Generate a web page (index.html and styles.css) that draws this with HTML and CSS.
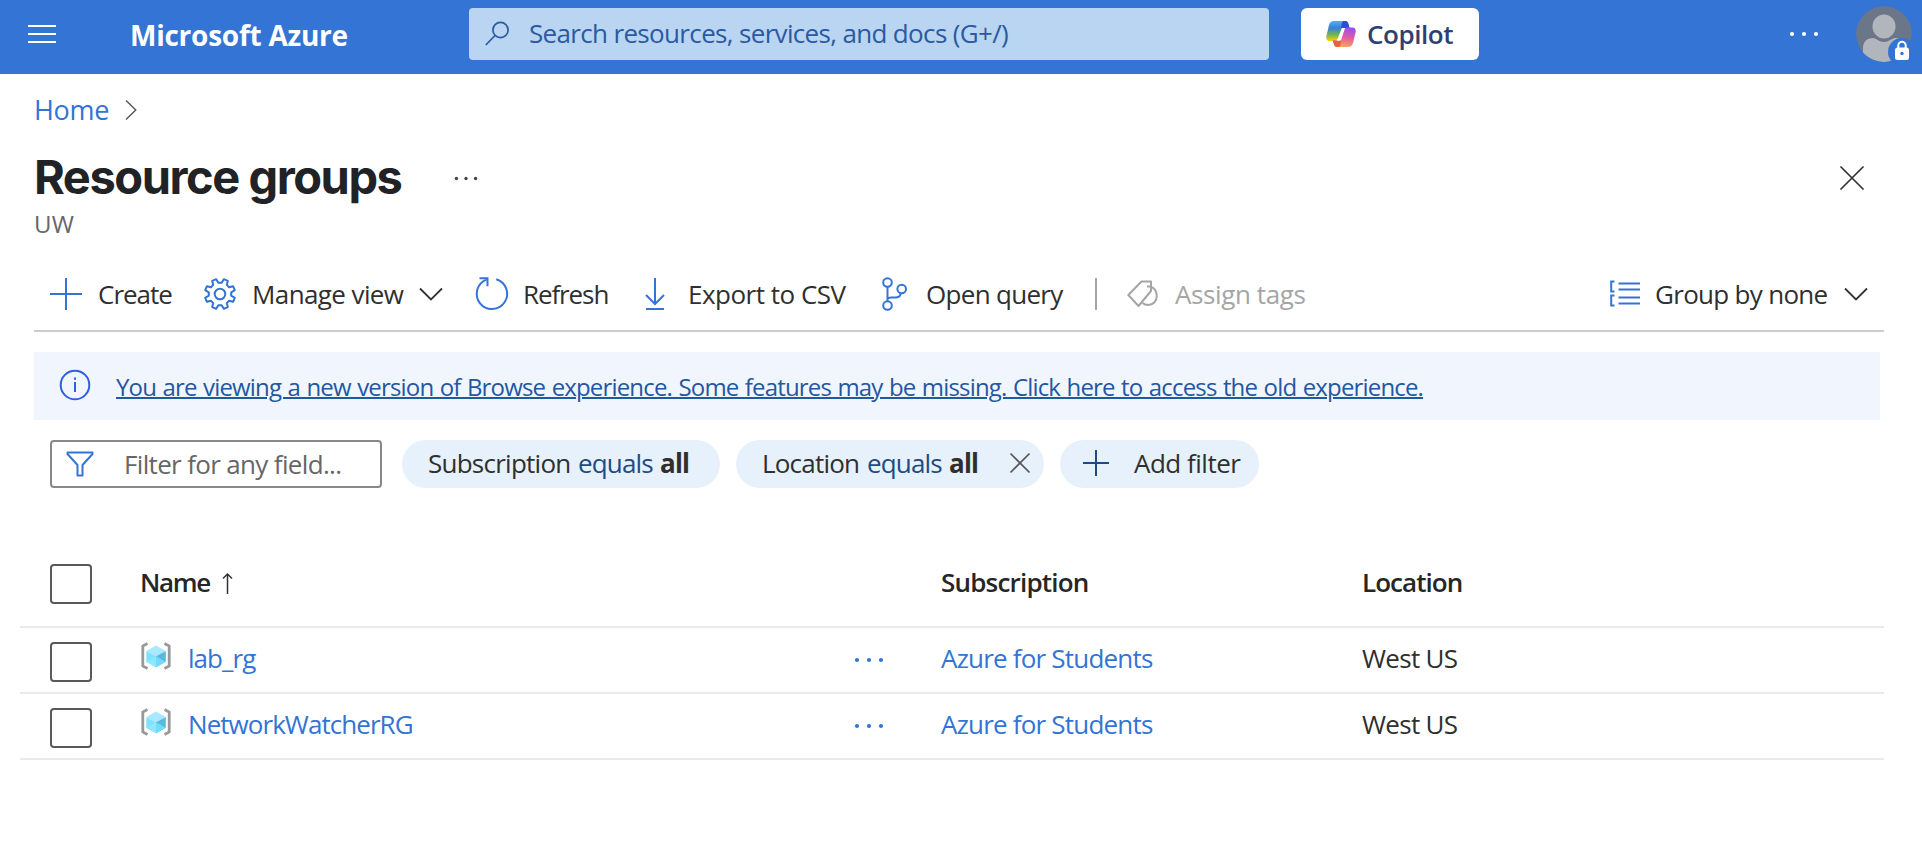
FILE: index.html
```html
<!DOCTYPE html>
<html lang="en">
<head>
<meta charset="utf-8">
<title>Resource groups - Microsoft Azure</title>
<link rel="stylesheet" href="styles.css">
</head>
<body>
<svg class="defs" width="0" height="0" aria-hidden="true">
  <defs>
    <linearGradient id="cpA" x1="0" y1="0" x2="0" y2="1"><stop offset="0" stop-color="#4fb0f4"/><stop offset=".35" stop-color="#3a7fdb"/><stop offset=".68" stop-color="#6fb551"/><stop offset="1" stop-color="#ffd000"/></linearGradient>
    <linearGradient id="cpB" x1=".6" y1="0" x2=".4" y2="1"><stop offset="0" stop-color="#9a4df0"/><stop offset=".5" stop-color="#e0609e"/><stop offset="1" stop-color="#fba556"/></linearGradient>
    <symbol id="rg" viewBox="0 0 30 28">
      <path d="M6.5 1.5 1.8 4v20l4.7 2.5M23.500 1.500 28.200 4v20l-4.700 2.500" fill="none" stroke="#999" stroke-width="2.800"/>
      <path d="M15 3.500 24.800 9 15 14.200 5.300 9z" fill="#a9e8ff"/>
      <path d="M5.300 9 15 14.200v11L5.300 19.700z" fill="#7de2ff"/>
      <path d="M24.800 9 15 14.200v11l9.800-5.500z" fill="#5bb9dc"/>
      <path d="M5.300 19.700 15 14.200v11z" fill="#8ee6ff"/>
      <path d="M24.800 19.700 15 14.200v11z" fill="#6fdcfb"/>
    </symbol>
    <symbol id="dots" viewBox="0 0 30 6"><circle cx="3" cy="3" r="2.100"/><circle cx="15" cy="3" r="2.100"/><circle cx="27" cy="3" r="2.100"/></symbol>
    <symbol id="chev" viewBox="0 0 24 14"><path d="M1 1.500 12 12.500 23 1.500" fill="none" stroke="#333" stroke-width="1.800"/></symbol>
  </defs>
</svg>

<header class="topbar">
  <svg class="menu" width="28" height="18" viewBox="0 0 28 18"><path d="M0 1h28M0 9h28M0 17h28" stroke="#fff" stroke-width="2"/></svg>
  <span class="brand">Microsoft Azure</span>
  <div class="search">
    <svg width="26" height="26" viewBox="0 0 26 26" fill="none" stroke="#2a5a9f" stroke-width="1.700"><circle cx="15.500" cy="9" r="7.600"/><path d="M10 14.500.8 24"/></svg>
    <span class="search-text">Search resources, services, and docs (G+/)</span>
  </div>
  <button class="copilot">
    <svg width="30" height="28" viewBox="0 0 30 28">
      <path d="M8 1h11c2 0 2.800 1.500 3.300 3.500L23.500 8H16l-4 10c-.8 2-2 3-4 3H3.500C1 21 0 19 .3 16.500L3 5c.7-2.500 2.500-4 5-4z" fill="url(#cpA)"/>
      <path d="M17.500 1h2c2 0 2.600 1.500 3.100 3.300L23.600 8H15c.4-3 1-7 2.500-7z" fill="#2a4fd0"/>
      <path d="M22 27H11c-2 0-2.800-1.500-3.300-3.500L6.700 20.500H13L18 10c.8-2 2-2.500 4-2.500h4.500c2.500 0 3.500 2 3.200 4.500L27 23c-.7 2.500-2.500 4-5 4z" fill="url(#cpB)"/>
      <path d="M13 27h-2.200c-1.800 0-2.500-1.500-3-3.300l-1-3.200h8.500c-.4 3-.9 6.500-2.300 6.500z" fill="#e5633f"/>
      <path d="M16.500 8.300H19L15.200 19.500c-.3.800-.8 1.200-1.600 1.200H10.800c.6-.4 1-1 1.300-2l3.400-9.300c.2-.6.500-1 1-1.100z" fill="#fff"/>
    </svg>
    <span>Copilot</span>
  </button>
  <svg class="more" width="30" height="6" fill="#fff"><use href="#dots"/></svg>
  <svg class="avatar" width="58" height="62" viewBox="0 0 58 62">
    <defs><clipPath id="av"><circle cx="28" cy="28" r="28"/></clipPath></defs>
    <g clip-path="url(#av)">
      <circle cx="28" cy="28" r="28" fill="#6b7788"/>
      <ellipse cx="28" cy="20.500" rx="11.500" ry="12" fill="#b1b6bc"/>
      <path d="M7 58V42c0-6 4-10 10-10 3 0 6 4 11 4s8-4 11-4c6 0 10 4 10 10v16z" fill="#b1b6bc"/>
    </g>
    <circle cx="46" cy="46" r="14" fill="#3374d5"/>
    <rect x="39" y="41.500" width="14" height="12.500" rx="2.500" fill="#fff"/>
    <path d="M42.300 42v-2.500a3.700 3.700 0 0 1 7.400 0V42" fill="none" stroke="#fff" stroke-width="2"/>
    <circle cx="46" cy="47.500" r="1.700" fill="#3374d5"/>
  </svg>
</header>

<nav class="crumbs">
  <a class="t-home">Home</a>
  <svg width="12" height="20" viewBox="0 0 12 20"><path d="M1 .5 10.800 10 1 19.500" fill="none" stroke="#555" stroke-width="1.400"/></svg>
</nav>

<div class="title-row">
  <h1>Resource groups</h1>
  <svg class="title-more" width="24" height="5" fill="#444"><use href="#dots"/></svg>
  <svg class="close" width="24" height="24" viewBox="0 0 24 24"><path d="M.5.500l23 23m0-23-23 23" stroke="#333" stroke-width="1.700"/></svg>
</div>
<div class="subtitle">UW</div>

<div class="toolbar">
  <svg width="32" height="32" viewBox="0 0 32 32"><path d="M16 0v32M0 16h32" stroke="#3374d5" stroke-width="2"/></svg>
  <span class="t-create">Create</span>
  <svg width="32" height="32" viewBox="0 0 32 32" fill="none" stroke="#3374d5" stroke-width="2" stroke-linejoin="round"><circle cx="16" cy="16" r="5.300"/><path d="M12.2 1.2 14.300 4.800h3.400L19.800 1.200l4 1.700-1 4 2.300 2.300 4-1 1.700 4-3.600 2.100v3.400l3.600 2.100-1.700 4-4-1-2.300 2.300 1 4-4 1.700-2.100-3.600h-3.400l-2.100 3.600-4-1.700 1-4-2.300-2.300-4 1-1.700-4 3.600-2.100v-3.400L1.200 12.200l1.700-4 4 1 2.300-2.300-1-4z"/></svg>
  <span class="t-manage">Manage view</span>
  <svg width="24" height="14"><use href="#chev"/></svg>
  <svg width="34" height="33" viewBox="0 0 34 33" fill="none" stroke="#3374d5" stroke-width="2"><path d="M21.200 2.200A15.200 15.200 0 1 1 11.500 2.600"/><path d="M4.500 1.200h8v8"/></svg>
  <span class="t-refresh">Refresh</span>
  <svg width="20" height="32" viewBox="0 0 20 32" fill="none" stroke="#3374d5" stroke-width="2"><path d="M10 0v26M1 17l9 9 9-9M1 31h18"/></svg>
  <span class="t-export">Export to CSV</span>
  <svg width="25" height="34" viewBox="0 0 25 34" fill="none" stroke="#3374d5" stroke-width="2"><circle cx="5.500" cy="5.500" r="4.300"/><circle cx="5.500" cy="28.500" r="4.300"/><circle cx="19.700" cy="12" r="4.300"/><path d="M5.500 10v14M5.500 22c1-1.600 2-1.600 3.500-1.600h5c3 0 4.700-1.900 4.700-4.300"/></svg>
  <span class="t-query">Open query</span>
  <i class="sep"></i>
  <svg width="31" height="28" viewBox="0 0 31 28" fill="none" stroke="#a5a5a5" stroke-width="2"><path d="M1.300 15 14.500 1.500H24V11L11.500 26z" stroke-linejoin="round"/><path d="M20 6.500h3.500c4 1.500 6.300 5 6.300 9.500 0 5.500-4 9-8.500 9-2.300 0-4.300-.7-5.800-2"/></svg>
  <span class="t-assign">Assign tags</span>
  <span></span>
  <svg width="30" height="28" viewBox="0 0 30 28" fill="none" stroke="#3374d5" stroke-width="2"><path d="M8.500 3.500H30M8.500 9.500H30M8.500 17.500H30M8.500 23.500H30M4.500 1.500H1.200v10h3.300M4.500 15.500H1.200v10h3.300"/></svg>
  <span class="t-group">Group by none</span>
  <svg width="24" height="14"><use href="#chev"/></svg>
</div>

<div class="banner">
  <svg class="info" width="32" height="32" viewBox="0 0 32 32" fill="none" stroke="#2f5fe0" stroke-width="2"><circle cx="16" cy="16" r="14.300"/><path d="M16 13v10M16 8.500v2.200"/></svg>
  <a class="t-banner">You are viewing a new version of Browse experience. Some features may be missing. Click here to access the old experience.</a>
</div>

<div class="filters">
  <div class="field">
    <svg width="28" height="26" viewBox="0 0 28 26" fill="none" stroke="#3374d5" stroke-width="2" stroke-linejoin="round"><path d="M1.500 1.500h25v1.500L16.500 14v10.500h-5V14L1.500 3z"/></svg>
    <span class="t-filter">Filter for any field...</span>
  </div>
  <div class="pill pill-sub"><span class="t-psub">Subscription</span><em>equals</em><b>all</b></div>
  <div class="pill pill-loc"><span class="t-ploc">Location</span><em>equals</em><b>all</b>
    <svg width="20" height="20" viewBox="0 0 20 20"><path d="M.5.500l19 19m0-19-19 19" stroke="#555" stroke-width="1.700"/></svg></div>
  <div class="pill pill-add"><svg width="26" height="26" viewBox="0 0 26 26"><path d="M13 0v26M0 13h26" stroke="#1d4b85" stroke-width="2"/></svg><span class="t-add">Add filter</span></div>
</div>

<div class="table">
  <div class="row head">
    <i class="check"></i>
    <div class="name"><span class="t-name">Name</span><svg class="sort" width="11" height="21" viewBox="0 0 11 21" fill="none" stroke="#333" stroke-width="1.500"><path d="M5.500 21V1M1 5.500l4.500-4.500L10 5.500"/></svg></div>
    <span></span>
    <span class="t-sub">Subscription</span>
    <span class="t-loc">Location</span>
  </div>
  <div class="row">
    <i class="check"></i>
    <div class="name"><svg class="rg" width="30" height="28"><use href="#rg"/></svg><a class="t-res">lab_rg</a></div>
    <svg class="rowdots" width="30" height="6"><use href="#dots"/></svg>
    <a class="t-azure">Azure for Students</a>
    <span class="t-west">West US</span>
  </div>
  <div class="row">
    <i class="check"></i>
    <div class="name"><svg class="rg" width="30" height="28"><use href="#rg"/></svg><a class="t-res">NetworkWatcherRG</a></div>
    <svg class="rowdots" width="30" height="6"><use href="#dots"/></svg>
    <a class="t-azure">Azure for Students</a>
    <span class="t-west">West US</span>
  </div>
</div>
</body>
</html>
```
FILE: styles.css
```css
* { box-sizing: border-box; }
body {
  margin: 0;
  width: 1922px;
  height: 844px;
  overflow: hidden;
  background: #fff;
  color: #2f2f2f;
  font: 26px/36px "Open Sans", "Noto Sans", sans-serif;
  letter-spacing: -0.5px;
  white-space: nowrap;
}
svg { display: block; flex: none; overflow: visible; }
.defs { position: absolute; }
a { color: #3374d5; }

.topbar {
  display: flex;
  height: 74px;
  background: #3374d5;
  padding-left: 28px;
}
.menu { margin: 25px 74px 0 0; }
.brand {
  width: 339px;
  padding-top: 17px;
  color: #fff;
  font-size: 28px;
  font-weight: 700;
  letter-spacing: -0.25px;
}
.search {
  display: flex;
  width: 800px;
  height: 52px;
  margin-top: 8px;
  padding: 13px 0 0 16px;
  background: #b9d5f2;
  border-radius: 4px;
}
.search-text { margin: -6px 0 0 18px; color: #2a5a9f; font-size: 26px; letter-spacing: -0.66px; }
.copilot {
  display: flex;
  align-items: center;
  width: 178px;
  height: 52px;
  margin: 8px 0 0 32px;
  padding: 0 0 0 25px;
  gap: 11px;
  border: 0;
  border-radius: 6px;
  background: #fff;
  color: #2d4170;
  font: 600 26px/36px "Open Sans", "Noto Sans", sans-serif;
  letter-spacing: -0.45px;
}
.more { margin: 31px 0 0 310px; }
.avatar { margin: 6px 0 0 37px; }

.crumbs { display: flex; align-items: center; height: 71px; padding-left: 34px; gap: 16px; }
.t-home { font-size: 27px; letter-spacing: -0.3px; }
.title-row { display: flex; align-items: center; height: 66px; padding: 0 58px 0 34px; }
h1 {
  margin: -3px 0 0;
  width: 420px;
  color: #212226;
  font: 700 47px/60px Inter, sans-serif;
  letter-spacing: -1.45px;
}
.close { margin-left: auto; }
.subtitle { height: 52px; padding-left: 34px; color: #666; font-size: 24px; line-height: 27px; letter-spacing: 0.3px; margin-top: -1px; margin-bottom: 1px; }

.toolbar {
  display: grid;
  grid-template-columns: 48px 106px 48px 167px 56px 48px 122px 43px 194px 44px 169px 32px 48px 130px 1fr 45px 189px 24px;
  align-items: center;
  width: 1850px;
  height: 69px;
  margin-left: 34px;
  padding: 0 16px 6px 16px;
  border-bottom: 2px solid #ccc;
}
.sep { width: 2px; height: 32px; background: #a5a5a5; }
.t-create { letter-spacing: -1px; }
.t-refresh { letter-spacing: -1.1px; }
.t-manage { letter-spacing: -0.6px; }
.t-query, .t-group { letter-spacing: -0.7px; }
.t-assign { color: #a5a5a5; letter-spacing: -0.4px; }

.banner {
  display: flex;
  align-items: center;
  width: 1846px;
  height: 68px;
  margin: 20px 0 20px 34px;
  padding-left: 25px;
  background: #f1f6fe;
}
.info { margin-top: -2px; }
.t-banner {
  margin: 2px 0 0 25px;
  color: #2457a2;
  font-size: 24px;
  letter-spacing: -0.83px;
  word-spacing: 1px;
  text-decoration: underline;
  text-decoration-thickness: 2px;
}

.filters { display: flex; height: 48px; padding-left: 50px; }
.field {
  display: flex;
  align-items: center;
  width: 332px;
  margin-right: 20px;
  padding-left: 14px;
  border: 2px solid #888;
  border-radius: 4px;
  color: #666;
}
.t-filter { margin-left: 30px; letter-spacing: -0.66px; }
.pill {
  display: flex;
  align-items: center;
  margin-right: 16px;
  padding-bottom: 2px;
  border-radius: 24px;
  background: #e7f1fb;
}
.pill em { width: 82px; color: #1d4b85; font-style: normal; letter-spacing: -0.85px; }
.pill-sub { width: 318px; padding-left: 26px; }
.pill-loc { width: 308px; padding-left: 26px; }
.pill-add { width: 199px; padding-left: 23px; }
.t-psub { width: 150px; letter-spacing: -0.75px; }
.t-ploc { width: 105px; letter-spacing: -0.8px; }
.pill b { letter-spacing: -0.8px; }
.pill-loc b { width: 61px; }
.t-add { margin-left: 25px; }

.table { width: 1864px; margin: 52px 0 0 20px; }
.row {
  display: grid;
  grid-template-columns: 90px 713px 88px 421px 1fr;
  align-items: center;
  height: 66px;
  padding: 0 0 2px 30px;
  border-bottom: 2px solid #eaeaea;
}
.head { height: 88px; padding-bottom: 0; font-weight: 600; color: #262626; }
.row > span, .row > a, .name { margin-top: -3px; }
.check { width: 42px; height: 40px; border: 2px solid #5a5a5a; border-radius: 4px; margin-top: 6px; }
.head .check { margin-top: 2px; }
.name { display: flex; align-items: center; }
.name .rg { margin: -3px 17px 0 1px; }
.sort { margin-top: 4px; }
.t-name { width: 82px; letter-spacing: -1.3px; }
.t-sub { letter-spacing: -0.8px; }
.t-loc, .t-res { letter-spacing: -0.95px; }
.t-azure { letter-spacing: -0.8px; }
.t-west { letter-spacing: -0.7px; }
.rowdots { fill: #3374d5; margin: 1px 0 0 1px; }
```
